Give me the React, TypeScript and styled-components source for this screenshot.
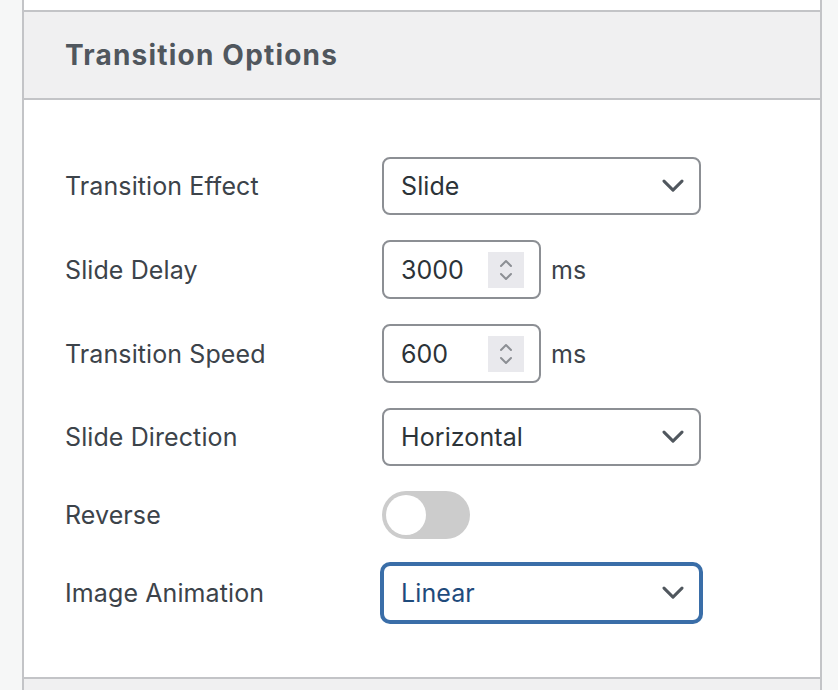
import React from 'react';
import styled, { createGlobalStyle } from 'styled-components';

const GlobalStyle = createGlobalStyle`
  html, body {
    margin: 0;
    padding: 0;
    background: #f6f7f7;
    font-family: Inter, "Noto Sans", "Liberation Sans", sans-serif;
  }
`;

const Chevron: React.FC<{ size?: number; color?: string }> = ({ size = 22, color = '#50575e' }) => (
  <svg width={size} height={size * 0.6} viewBox="0 0 22 13" fill="none">
    <path d="M2 2l9 9 9-9" stroke={color} strokeWidth="3" strokeLinecap="round" strokeLinejoin="round" />
  </svg>
);

const SpinIcon: React.FC = () => (
  <svg width="14" height="26" viewBox="0 0 14 26" fill="none">
    <path d="M2 9l5-5 5 5" stroke="#8c8f94" strokeWidth="2" strokeLinecap="round" strokeLinejoin="round" />
    <path d="M2 17l5 5 5-5" stroke="#8c8f94" strokeWidth="2" strokeLinecap="round" strokeLinejoin="round" />
  </svg>
);

type Option = { label: string; kind: 'select' | 'number' | 'toggle'; value?: string; focused?: boolean };

const options: Option[] = [
  { label: 'Transition Effect', kind: 'select', value: 'Slide' },
  { label: 'Slide Delay', kind: 'number', value: '3000' },
  { label: 'Transition Speed', kind: 'number', value: '600' },
  { label: 'Slide Direction', kind: 'select', value: 'Horizontal' },
  { label: 'Reverse', kind: 'toggle' },
  { label: 'Image Animation', kind: 'select', value: 'Linear', focused: true },
];

const App: React.FC = () => {
  return (
    <>
      <GlobalStyle />
      <Page>
        <Column>
          <PrevTail />
          <Header>
            <Title>Transition Options</Title>
          </Header>
          <Body>
            {options.map((opt) => (
              <Row key={opt.label}>
                <Label>{opt.label}</Label>
                {opt.kind === 'select' && (
                  <Select $focused={opt.focused}>
                    <span>{opt.value}</span>
                    <Chevron />
                  </Select>
                )}
                {opt.kind === 'number' && (
                  <NumberGroup>
                    <NumberBox>
                      <span>{opt.value}</span>
                      <Spinner>
                        <SpinIcon />
                      </Spinner>
                    </NumberBox>
                    <Unit>ms</Unit>
                  </NumberGroup>
                )}
                {opt.kind === 'toggle' && (
                  <Toggle>
                    <Knob />
                  </Toggle>
                )}
              </Row>
            ))}
          </Body>
          <NextHeader />
        </Column>
      </Page>
    </>
  );
};

const Page = styled.div`
  height: 690px;
  overflow: hidden;
  padding-left: 22px;
`;

const Column = styled.div`
  width: 796px;
  border-left: 2px solid #c3c4c7;
  border-right: 2px solid #c3c4c7;
  background: #ffffff;
`;

const PrevTail = styled.div`
  height: 10px;
  background: #ffffff;
`;

const Header = styled.div`
  height: 86px;
  display: flex;
  align-items: center;
  padding-left: 41px;
  background: #f0f0f1;
  border-top: 2px solid #c3c4c7;
  border-bottom: 2px solid #c3c4c7;
`;

const Title = styled.h2`
  margin: 0;
  font-size: 28px;
  font-weight: 700;
  color: #50575e;
  letter-spacing: 1.2px;
`;

const Body = styled.div`
  display: flex;
  flex-direction: column;
  gap: 25px;
  padding: 57px 0 55px 41px;
`;

const Row = styled.div`
  display: grid;
  grid-template-columns: 317px auto;
  align-items: center;
`;

const Label = styled.div`
  font-size: 25px;
  letter-spacing: 0.1px;
  color: #3c434a;
`;

const Select = styled.div<{ $focused?: boolean }>`
  box-sizing: border-box;
  width: 319px;
  height: 58px;
  display: flex;
  align-items: center;
  justify-content: space-between;
  padding: 0 15px 0 17px;
  border: 2px solid ${(p) => (p.$focused ? '#3a6ea8' : '#8c8f94')};
  box-shadow: ${(p) => (p.$focused ? '0 0 0 2px #3a6ea8' : 'none')};
  border-radius: 8px;
  background: #ffffff;
  font-size: 25px;
  letter-spacing: 0.1px;
  color: ${(p) => (p.$focused ? '#1f4b7c' : '#2c3338')};
`;

const NumberGroup = styled.div`
  display: flex;
  align-items: center;
  gap: 10px;
`;

const NumberBox = styled.div`
  box-sizing: border-box;
  width: 159px;
  height: 59px;
  display: flex;
  align-items: center;
  justify-content: space-between;
  padding: 0 15px 0 17px;
  border: 2px solid #8c8f94;
  border-radius: 8px;
  font-size: 25px;
  color: #2c3338;
`;

const Spinner = styled.div`
  width: 36px;
  height: 36px;
  display: flex;
  align-items: center;
  justify-content: center;
  background: #e9e9ed;
`;

const Unit = styled.span`
  font-size: 25px;
  color: #3c434a;
`;

const Toggle = styled.div`
  box-sizing: border-box;
  width: 88px;
  height: 48px;
  padding: 4px;
  border-radius: 24px;
  background: #cccccc;
  display: flex;
  align-items: center;
`;

const Knob = styled.div`
  width: 40px;
  height: 40px;
  border-radius: 50%;
  background: #ffffff;
`;

const NextHeader = styled.div`
  height: 20px;
  background: #f0f0f1;
  border-top: 2px solid #c3c4c7;
`;

export default App;
